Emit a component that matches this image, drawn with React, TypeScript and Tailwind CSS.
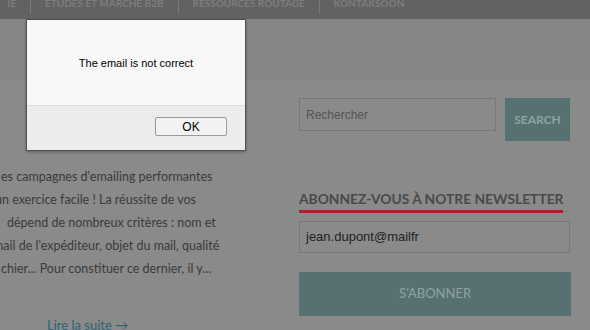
const lines = [
  { text: "es campagnes d'emailing performantes", cls: "ml-[1px]" },
  { text: "un exercice facile ! La réussite de vos", cls: "-ml-[5px]" },
  { text: "dépend de nombreux critères : nom et", cls: "ml-[7px]" },
  { text: "mail de l'expéditeur, objet du mail, qualité", cls: "-ml-[7px]" },
  { text: "chier... Pour constituer ce dernier, il y...", cls: "ml-[1px]" },
];

const navItems = ["ÉTUDES ET MARCHÉ B2B", "RESSOURCES ROUTAGE", "KONTAKSOON"];

export default function App() {
  return (
    <div className="relative w-[590px] h-[330px] overflow-hidden bg-[#8a8a8a] font-[Lato,sans-serif]">
      {/* dimmed top navigation, cut off at the top */}
      <nav className="h-[19px] bg-[#626262] overflow-hidden flex items-start text-[10px] font-bold text-[#7d7d7d]">
        <div className="-mt-[8px] flex items-center">
          <span className="w-[30px] text-right pr-[14px] overflow-hidden">IE</span>
          {navItems.map((item) => (
            <div key={item} className="flex items-center">
              <span className="h-[20px] w-px bg-[#7a7a7a] mt-[2px]" />
              <span className="px-[14px]">{item}</span>
            </div>
          ))}
        </div>
      </nav>
      <div className="h-[60px] bg-[#868686]" />

      <div className="flex">
        {/* article excerpt */}
        <div className="w-[299px] pt-[86px]">
          <div className="w-[245px] overflow-hidden text-[12.5px] leading-[23px] text-[#3a3a3a]">
            {lines.map((l) => (
              <p key={l.text} className={"whitespace-nowrap " + l.cls}>
                {l.text}
              </p>
            ))}
          </div>
          <p className="mt-[36px] ml-[47px] text-[13px] text-[#2d6373]">Lire la suite →</p>
        </div>

        {/* sidebar */}
        <div className="w-[272px] -mt-[1px]">
          <div className="flex items-start gap-[9px] pt-[20px]">
            <div className="w-[197px] h-[33px] border border-[#777] flex items-center pl-[6px] font-[Arial,sans-serif] text-[12px] text-[#555]">
              Rechercher
            </div>
            <div className="w-[65px] h-[43px] bg-[#577172] flex items-center justify-center text-[12px] font-bold text-[#8fa2a3]">
              SEARCH
            </div>
          </div>

          <div className="mt-[49px] relative">
            <h3 className="text-[13.8px] font-bold text-[#494949] leading-[18px] whitespace-nowrap">
              ABONNEZ-VOUS À NOTRE NEWSLETTER
            </h3>
            <div className="mt-[3px] h-px bg-[#7d7d7d] w-[271px]" />
            <div className="absolute left-0 top-[20px] h-[3px] w-[264px] bg-[#a0262a]" />
          </div>

          <div className="mt-[9px] w-[271px] h-[32px] border border-[#777] flex items-center pl-[6px] font-[Arial,sans-serif] text-[13px] text-[#222]">
            jean.dupont@mailfr
          </div>
          <div className="mt-[19px] w-[272px] h-[44px] bg-[#577172] flex items-center justify-center text-[13px] text-[#8fa2a3]">
            S’ABONNER
          </div>
        </div>
      </div>

      {/* alert dialog */}
      <div className="absolute left-[26px] top-[19px] w-[220px] h-[132px] border border-[#505050] flex flex-col font-[Arial,sans-serif] shadow-[0_1px_3px_rgba(0,0,0,0.3)]">
        <div className="h-[85px] bg-[#f8f8f8] flex items-center justify-center pt-[2px] text-[11px] text-black">
          The email is not correct
        </div>
        <div className="flex-1 bg-[#ececec] border-t border-[#dcdcdc] flex items-start justify-end pr-[18px] pt-[11px]">
          <button className="w-[72px] h-[19px] rounded-[2px] border border-[#9a9a9a] bg-[#f2f2f2] text-[12px] text-black leading-none">
            OK
          </button>
        </div>
      </div>
    </div>
  );
}
